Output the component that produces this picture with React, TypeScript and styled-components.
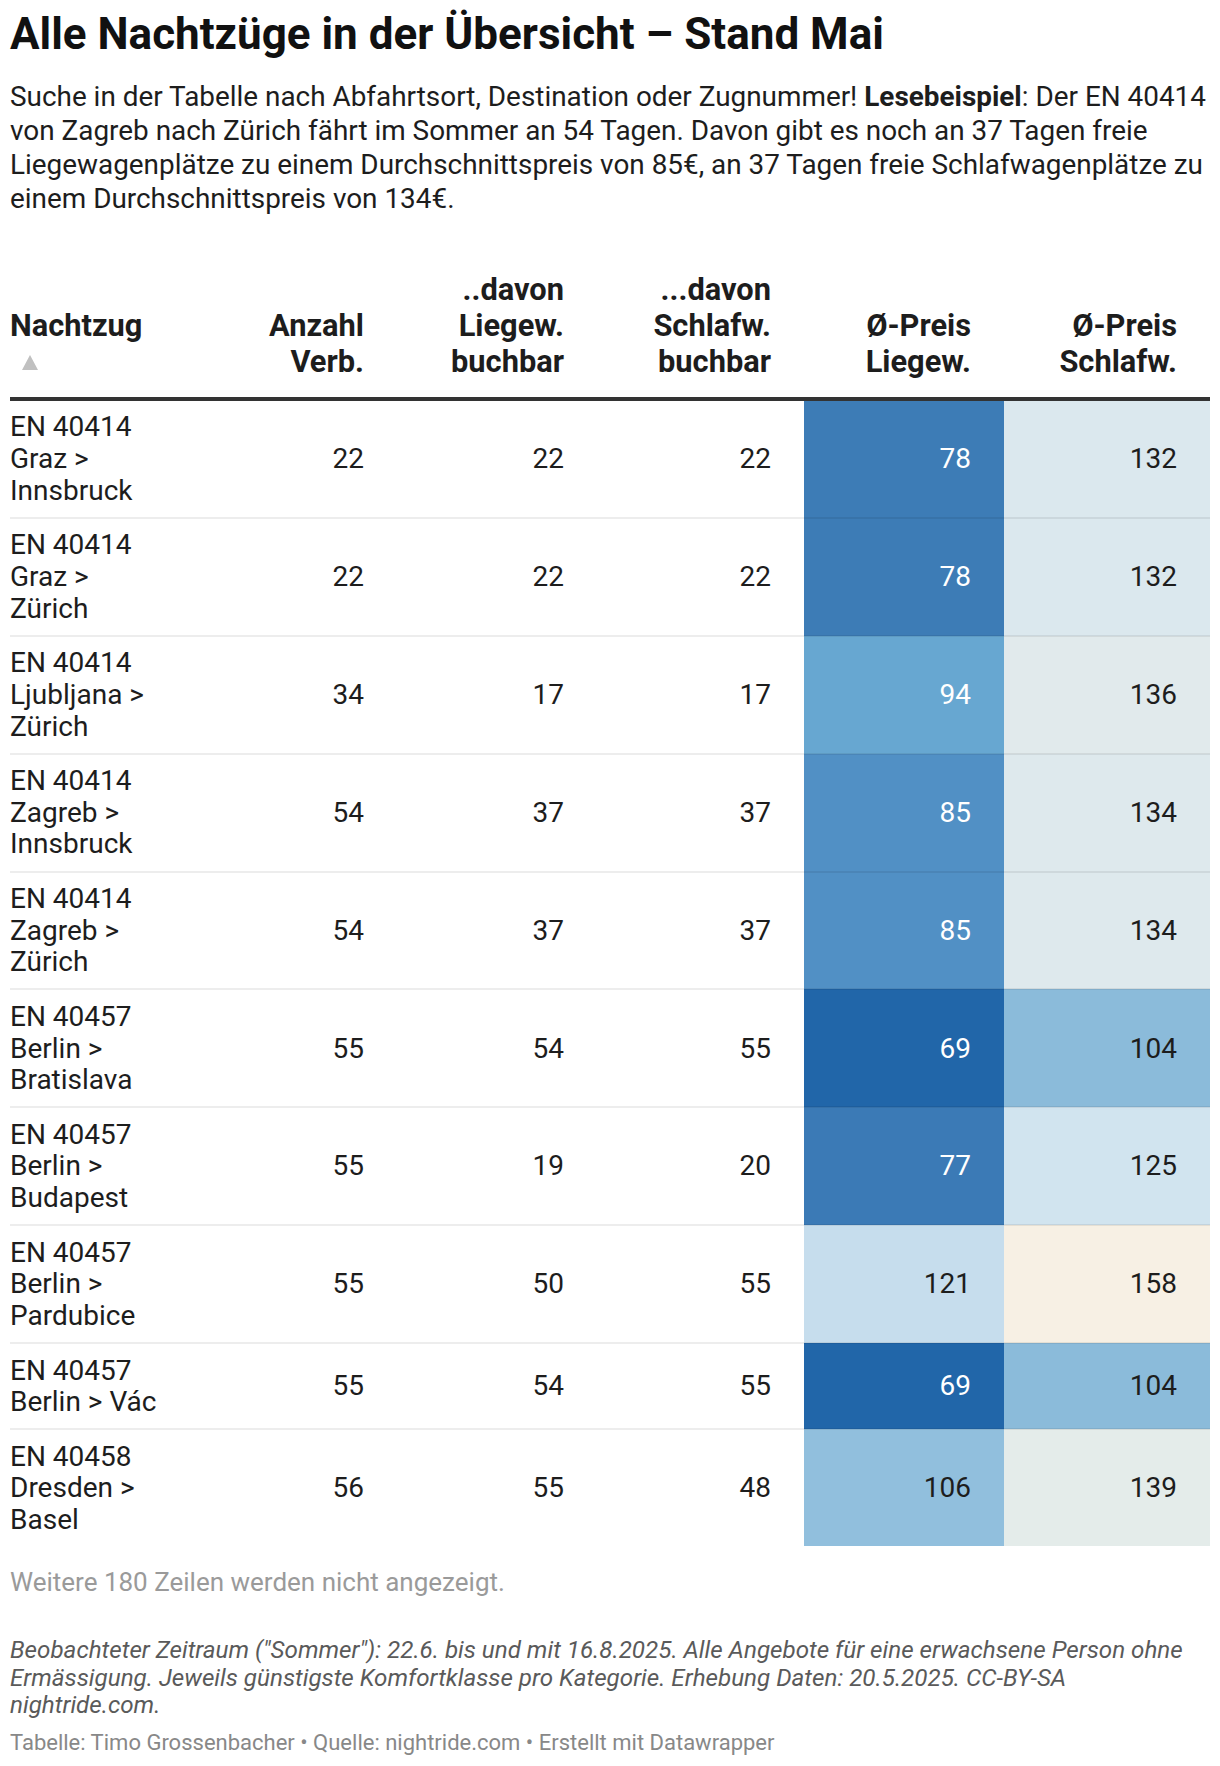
import React from "react";
import styled, { createGlobalStyle } from "styled-components";

const Global = createGlobalStyle`
  html, body { margin: 0; padding: 0; background: #ffffff; }
  body { font-family: Roboto, "Liberation Sans", Arial, sans-serif; color: #1d1d1d; }
  *, *::before, *::after { box-sizing: border-box; }
`;

const Page = styled.div`
  width: 1220px;
  padding: 8px 10px 0 10px;
`;

const Title = styled.h1`
  margin: 0;
  font-size: 44px;
  line-height: 52px;
  font-weight: 700;
  color: #111111;
`;

const Description = styled.p`
  margin: 20px 0 0 0;
  font-size: 27.9px;
  line-height: 34px;
  color: #1d1d1d;
  b { font-weight: 700; }
`;

const Table = styled.table`
  margin-top: 56px;
  width: 1200px;
  border-collapse: collapse;
  table-layout: fixed;
`;

const HeadCell = styled.th<{ $w: number; $left?: boolean }>`
  width: ${(p) => p.$w}px;
  padding: 0 33px 17px 0;
  text-align: ${(p) => (p.$left ? "left" : "right")};
  vertical-align: bottom;
  font-size: 30.8px;
  line-height: 36px;
  font-weight: 700;
  color: #1d1d1d;
  border-bottom: 4px solid #333333;
`;

const SortRow = styled.div`
  height: 36px;
  display: flex;
  align-items: center;
  padding-left: 12px;
`;

const Row = styled.tr`
  &:not(:last-child) td { border-bottom: 2px solid rgba(0, 0, 0, 0.07); }
`;

const Cell = styled.td<{ $left?: boolean; $bg?: string; $light?: boolean }>`
  padding: 10.4px 33px 10.4px 0;
  text-align: ${(p) => (p.$left ? "left" : "right")};
  vertical-align: middle;
  font-size: 28px;
  line-height: 31.7px;
  color: ${(p) => (p.$light ? "#ffffff" : "#1d1d1d")};
  background: ${(p) => p.$bg || "transparent"};
`;

const MoreRows = styled.p`
  margin: 19.5px 0 0 0;
  font-size: 26px;
  line-height: 33px;
  color: #9a9a9a;
`;

const Notes = styled.p`
  margin: 38.7px 0 0 0;
  font-size: 24.2px;
  line-height: 27.5px;
  font-style: italic;
  color: #5a5a5a;
`;

const Byline = styled.p`
  margin: 10.5px 0 0 0;
  font-size: 22px;
  line-height: 26px;
  color: #888888;
`;

const liegeColors: Record<number, string> = {
  69: "#2166a9",
  77: "#3b7ab6",
  78: "#3d7cb6",
  85: "#5190c5",
  94: "#67a7d1",
  106: "#91bfdd",
  121: "#c6dded",
};

const schlafColors: Record<number, string> = {
  104: "#8bbbda",
  125: "#d1e4ef",
  132: "#dbe8ee",
  134: "#dee9ed",
  136: "#e1eaec",
  139: "#e4ecea",
  158: "#f7f0e4",
};

type Train = {
  nr: string;
  route: string;
  anzahl: number;
  liege: number;
  schlaf: number;
  pLiege: number;
  pSchlaf: number;
};

const rows: Train[] = [
  { nr: "EN 40414", route: "Graz > Innsbruck", anzahl: 22, liege: 22, schlaf: 22, pLiege: 78, pSchlaf: 132 },
  { nr: "EN 40414", route: "Graz > Zürich", anzahl: 22, liege: 22, schlaf: 22, pLiege: 78, pSchlaf: 132 },
  { nr: "EN 40414", route: "Ljubljana > Zürich", anzahl: 34, liege: 17, schlaf: 17, pLiege: 94, pSchlaf: 136 },
  { nr: "EN 40414", route: "Zagreb > Innsbruck", anzahl: 54, liege: 37, schlaf: 37, pLiege: 85, pSchlaf: 134 },
  { nr: "EN 40414", route: "Zagreb > Zürich", anzahl: 54, liege: 37, schlaf: 37, pLiege: 85, pSchlaf: 134 },
  { nr: "EN 40457", route: "Berlin > Bratislava", anzahl: 55, liege: 54, schlaf: 55, pLiege: 69, pSchlaf: 104 },
  { nr: "EN 40457", route: "Berlin > Budapest", anzahl: 55, liege: 19, schlaf: 20, pLiege: 77, pSchlaf: 125 },
  { nr: "EN 40457", route: "Berlin > Pardubice", anzahl: 55, liege: 50, schlaf: 55, pLiege: 121, pSchlaf: 158 },
  { nr: "EN 40457", route: "Berlin > Vác", anzahl: 55, liege: 54, schlaf: 55, pLiege: 69, pSchlaf: 104 },
  { nr: "EN 40458", route: "Dresden > Basel", anzahl: 56, liege: 55, schlaf: 48, pLiege: 106, pSchlaf: 139 },
];

const SortArrow = () => (
  <svg width="16" height="15" viewBox="0 0 16 15" aria-hidden="true">
    <polygon points="8,0 16,15 0,15" fill="#c0c0c0" />
  </svg>
);

export default function App() {
  return (
    <Page>
      <Global />
      <Title>Alle Nachtzüge in der Übersicht – Stand Mai</Title>
      <Description>
        Suche in der Tabelle nach Abfahrtsort, Destination oder Zugnummer! <b>Lesebeispiel</b>: Der EN 40414 von
        Zagreb nach Zürich fährt im Sommer an 54 Tagen. Davon gibt es noch an 37 Tagen freie Liegewagenplätze zu
        einem Durchschnittspreis von 85€, an 37 Tagen freie Schlafwagenplätze zu einem Durchschnittspreis von 134€.
      </Description>
      <Table>
        <thead>
          <tr>
            <HeadCell $w={187} $left>
              Nachtzug
              <SortRow>
                <SortArrow />
              </SortRow>
            </HeadCell>
            <HeadCell $w={200}>Anzahl Verb.</HeadCell>
            <HeadCell $w={200}>..davon Liegew. buchbar</HeadCell>
            <HeadCell $w={207}>...davon Schlafw. buchbar</HeadCell>
            <HeadCell $w={200}>Ø-Preis Liegew.</HeadCell>
            <HeadCell $w={206}>Ø-Preis Schlafw.</HeadCell>
          </tr>
        </thead>
        <tbody>
          {rows.map((r, i) => (
            <Row key={i}>
              <Cell $left>
                {r.nr} {r.route}
              </Cell>
              <Cell>{r.anzahl}</Cell>
              <Cell>{r.liege}</Cell>
              <Cell>{r.schlaf}</Cell>
              <Cell $bg={liegeColors[r.pLiege]} $light={r.pLiege < 100}>
                {r.pLiege}
              </Cell>
              <Cell $bg={schlafColors[r.pSchlaf]}>{r.pSchlaf}</Cell>
            </Row>
          ))}
        </tbody>
      </Table>
      <MoreRows>Weitere 180 Zeilen werden nicht angezeigt.</MoreRows>
      <Notes>
        Beobachteter Zeitraum ("Sommer"): 22.6. bis und mit 16.8.2025. Alle Angebote für eine erwachsene Person ohne
        Ermässigung. Jeweils günstigste Komfortklasse pro Kategorie. Erhebung Daten: 20.5.2025. CC-BY-SA
        nightride.com.
      </Notes>
      <Byline>Tabelle: Timo Grossenbacher • Quelle: nightride.com • Erstellt mit Datawrapper</Byline>
    </Page>
  );
}
